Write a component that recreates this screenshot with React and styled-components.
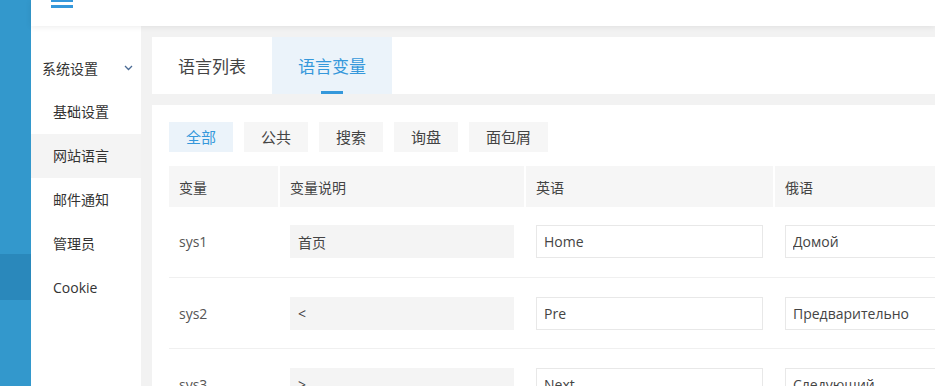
import React, { useState } from "react";
import styled, { createGlobalStyle } from "styled-components";

const GlobalStyle = createGlobalStyle`
  html, body {
    margin: 0;
    padding: 0;
    background: #f2f2f2;
    font-family: "Open Sans", "Noto Sans CJK SC", sans-serif;
    color: #333;
    overflow: hidden;
  }
`;

const menu = ["基础设置", "网站语言", "邮件通知", "管理员", "Cookie"];
const filters = ["全部", "公共", "搜索", "询盘", "面包屑"];
const rows = [
  { key: "sys1", desc: "首页", en: "Home", ru: "Домой" },
  { key: "sys2", desc: "<", en: "Pre", ru: "Предварительно" },
  { key: "sys3", desc: ">", en: "Next", ru: "Следующий" },
];

export default function App() {
  const [tab, setTab] = useState(1);
  const [filter, setFilter] = useState(0);
  return (
    <>
      <GlobalStyle />
      <Page>
        <Rail>
          <RailBand />
        </Rail>
        <Body>
          <Header>
            <Burger width="22" height="9" viewBox="0 0 22 9">
              <rect x="0" y="-1" width="22" height="3" fill="#3598db" />
              <rect x="0" y="5" width="22" height="3" fill="#3598db" />
            </Burger>
          </Header>
          <Columns>
            <SubMenu>
              <GroupTitle>
                系统设置
                <svg width="9" height="6" viewBox="0 0 9 6">
                  <path d="M1 1l3.5 3.5L8 1" stroke="#4a6a94" strokeWidth="1.3" fill="none" />
                </svg>
              </GroupTitle>
              {menu.map((m, i) => (
                <MenuItem key={m} $active={i === 1}>
                  {m}
                </MenuItem>
              ))}
            </SubMenu>
            <Main>
              <TabBar>
                {["语言列表", "语言变量"].map((t, i) => (
                  <Tab key={t} $active={tab === i} onClick={() => setTab(i)}>
                    {t}
                  </Tab>
                ))}
              </TabBar>
              <Card>
                <Filters>
                  {filters.map((f, i) => (
                    <FilterBtn key={f} $active={filter === i} onClick={() => setFilter(i)}>
                      {f}
                    </FilterBtn>
                  ))}
                </Filters>
                <Table>
                  <HeadRow>
                    <HeadCell>变量</HeadCell>
                    <HeadCell>变量说明</HeadCell>
                    <HeadCell>英语</HeadCell>
                    <HeadCell>俄语</HeadCell>
                  </HeadRow>
                  {rows.map((r) => (
                    <Row key={r.key}>
                      <KeyCell>{r.key}</KeyCell>
                      <Cell>
                        <Field $readonly readOnly defaultValue={r.desc} />
                      </Cell>
                      <Cell>
                        <Field defaultValue={r.en} />
                      </Cell>
                      <Cell>
                        <Field defaultValue={r.ru} />
                      </Cell>
                    </Row>
                  ))}
                </Table>
              </Card>
            </Main>
          </Columns>
        </Body>
      </Page>
    </>
  );
}

const Page = styled.div`
  display: flex;
  width: 935px;
  height: 386px;
  overflow: hidden;
`;

const Rail = styled.div`
  width: 31px;
  flex: none;
  background: #3398cc;
  padding-top: 254px;
  box-sizing: border-box;
`;

const RailBand = styled.div`
  height: 46px;
  background: #2a88bb;
`;

const Body = styled.div`
  flex: 1;
  min-width: 0;
  display: flex;
  flex-direction: column;
`;

const Header = styled.div`
  height: 26px;
  flex: none;
  background: #fff;
  padding-left: 20px;
  box-shadow: 0 1px 6px rgba(0, 0, 0, 0.08);
  position: relative;
  z-index: 2;
`;

const Burger = styled.svg`
  display: block;
`;

const Columns = styled.div`
  flex: 1;
  display: flex;
  min-height: 0;
`;

const SubMenu = styled.div`
  width: 110px;
  flex: none;
  background: #fff;
  padding-top: 20px;
  font-size: 14px;
  font-family: "Noto Sans CJK SC", "Open Sans", sans-serif;
`;

const GroupTitle = styled.div`
  height: 44px;
  display: flex;
  align-items: center;
  justify-content: space-between;
  padding: 0 8px 0 11px;
  color: #333;
  svg {
    display: block;
  }
`;

const MenuItem = styled.div`
  height: 44px;
  line-height: 44px;
  padding-left: 22px;
  color: #333;
  background: ${(p) => (p.$active ? "#f4f4f4" : "#fff")};
  font-family: "Open Sans", "Noto Sans CJK SC", sans-serif;
`;

const Main = styled.div`
  flex: 1;
  min-width: 0;
  padding: 11px 0 0 11px;
  display: flex;
  flex-direction: column;
  gap: 11px;
`;

const TabBar = styled.div`
  height: 57px;
  flex: none;
  background: #fff;
  display: flex;
`;

const Tab = styled.div`
  width: 120px;
  position: relative;
  display: flex;
  align-items: center;
  justify-content: center;
  font-size: 17px;
  font-family: "Noto Sans CJK SC", sans-serif;
  color: ${(p) => (p.$active ? "#3598db" : "#444")};
  background: ${(p) => (p.$active ? "#ebf3fa" : "#fff")};
  padding-bottom: 1px;
  cursor: pointer;
  &::after {
    content: "";
    display: ${(p) => (p.$active ? "block" : "none")};
    position: absolute;
    left: 49px;
    bottom: 0;
    width: 22px;
    height: 3px;
    background: #3598db;
  }
`;

const Card = styled.div`
  flex: 1;
  background: #fff;
  padding: 17px 0 0 17px;
`;

const Filters = styled.div`
  display: flex;
  gap: 11px;
  margin-bottom: 14px;
`;

const FilterBtn = styled.div`
  height: 30px;
  line-height: 30px;
  padding: 0 17px;
  font-size: 15px;
  font-family: "Noto Sans CJK SC", sans-serif;
  color: ${(p) => (p.$active ? "#3598db" : "#444")};
  background: ${(p) => (p.$active ? "#ebf3fa" : "#f6f6f6")};
  cursor: pointer;
`;

const Table = styled.div`
  width: 860px;
`;

const grid = `
  display: grid;
  grid-template-columns: 109px 244px 247px 247px;
  column-gap: 2px;
`;

const HeadRow = styled.div`
  ${grid}
  height: 41px;
`;

const HeadCell = styled.div`
  background: #f6f6f6;
  display: flex;
  align-items: center;
  padding-left: 10px;
  font-size: 14px;
  color: #444;
  font-family: "Noto Sans CJK SC", sans-serif;
`;

const Row = styled.div`
  ${grid}
  padding: 18px 0 19px;
  border-bottom: 1px solid #f0f0f0;
  & + & {
    padding-top: 19px;
    padding-bottom: 18px;
  }
`;

const Cell = styled.div`
  padding: 0 10px;
  display: flex;
  align-items: center;
`;

const KeyCell = styled(Cell)`
  font-size: 14px;
  color: #555;
`;

const Field = styled.input`
  width: 100%;
  height: 33px;
  box-sizing: border-box;
  border: 1px solid ${(p) => (p.$readonly ? "#f4f4f4" : "#e8e8e8")};
  background: ${(p) => (p.$readonly ? "#f4f4f4" : "#fff")};
  padding: 0 7px;
  font-size: 14px;
  color: #444;
  font-family: "Open Sans", "Noto Sans CJK SC", sans-serif;
  outline: none;
`;
